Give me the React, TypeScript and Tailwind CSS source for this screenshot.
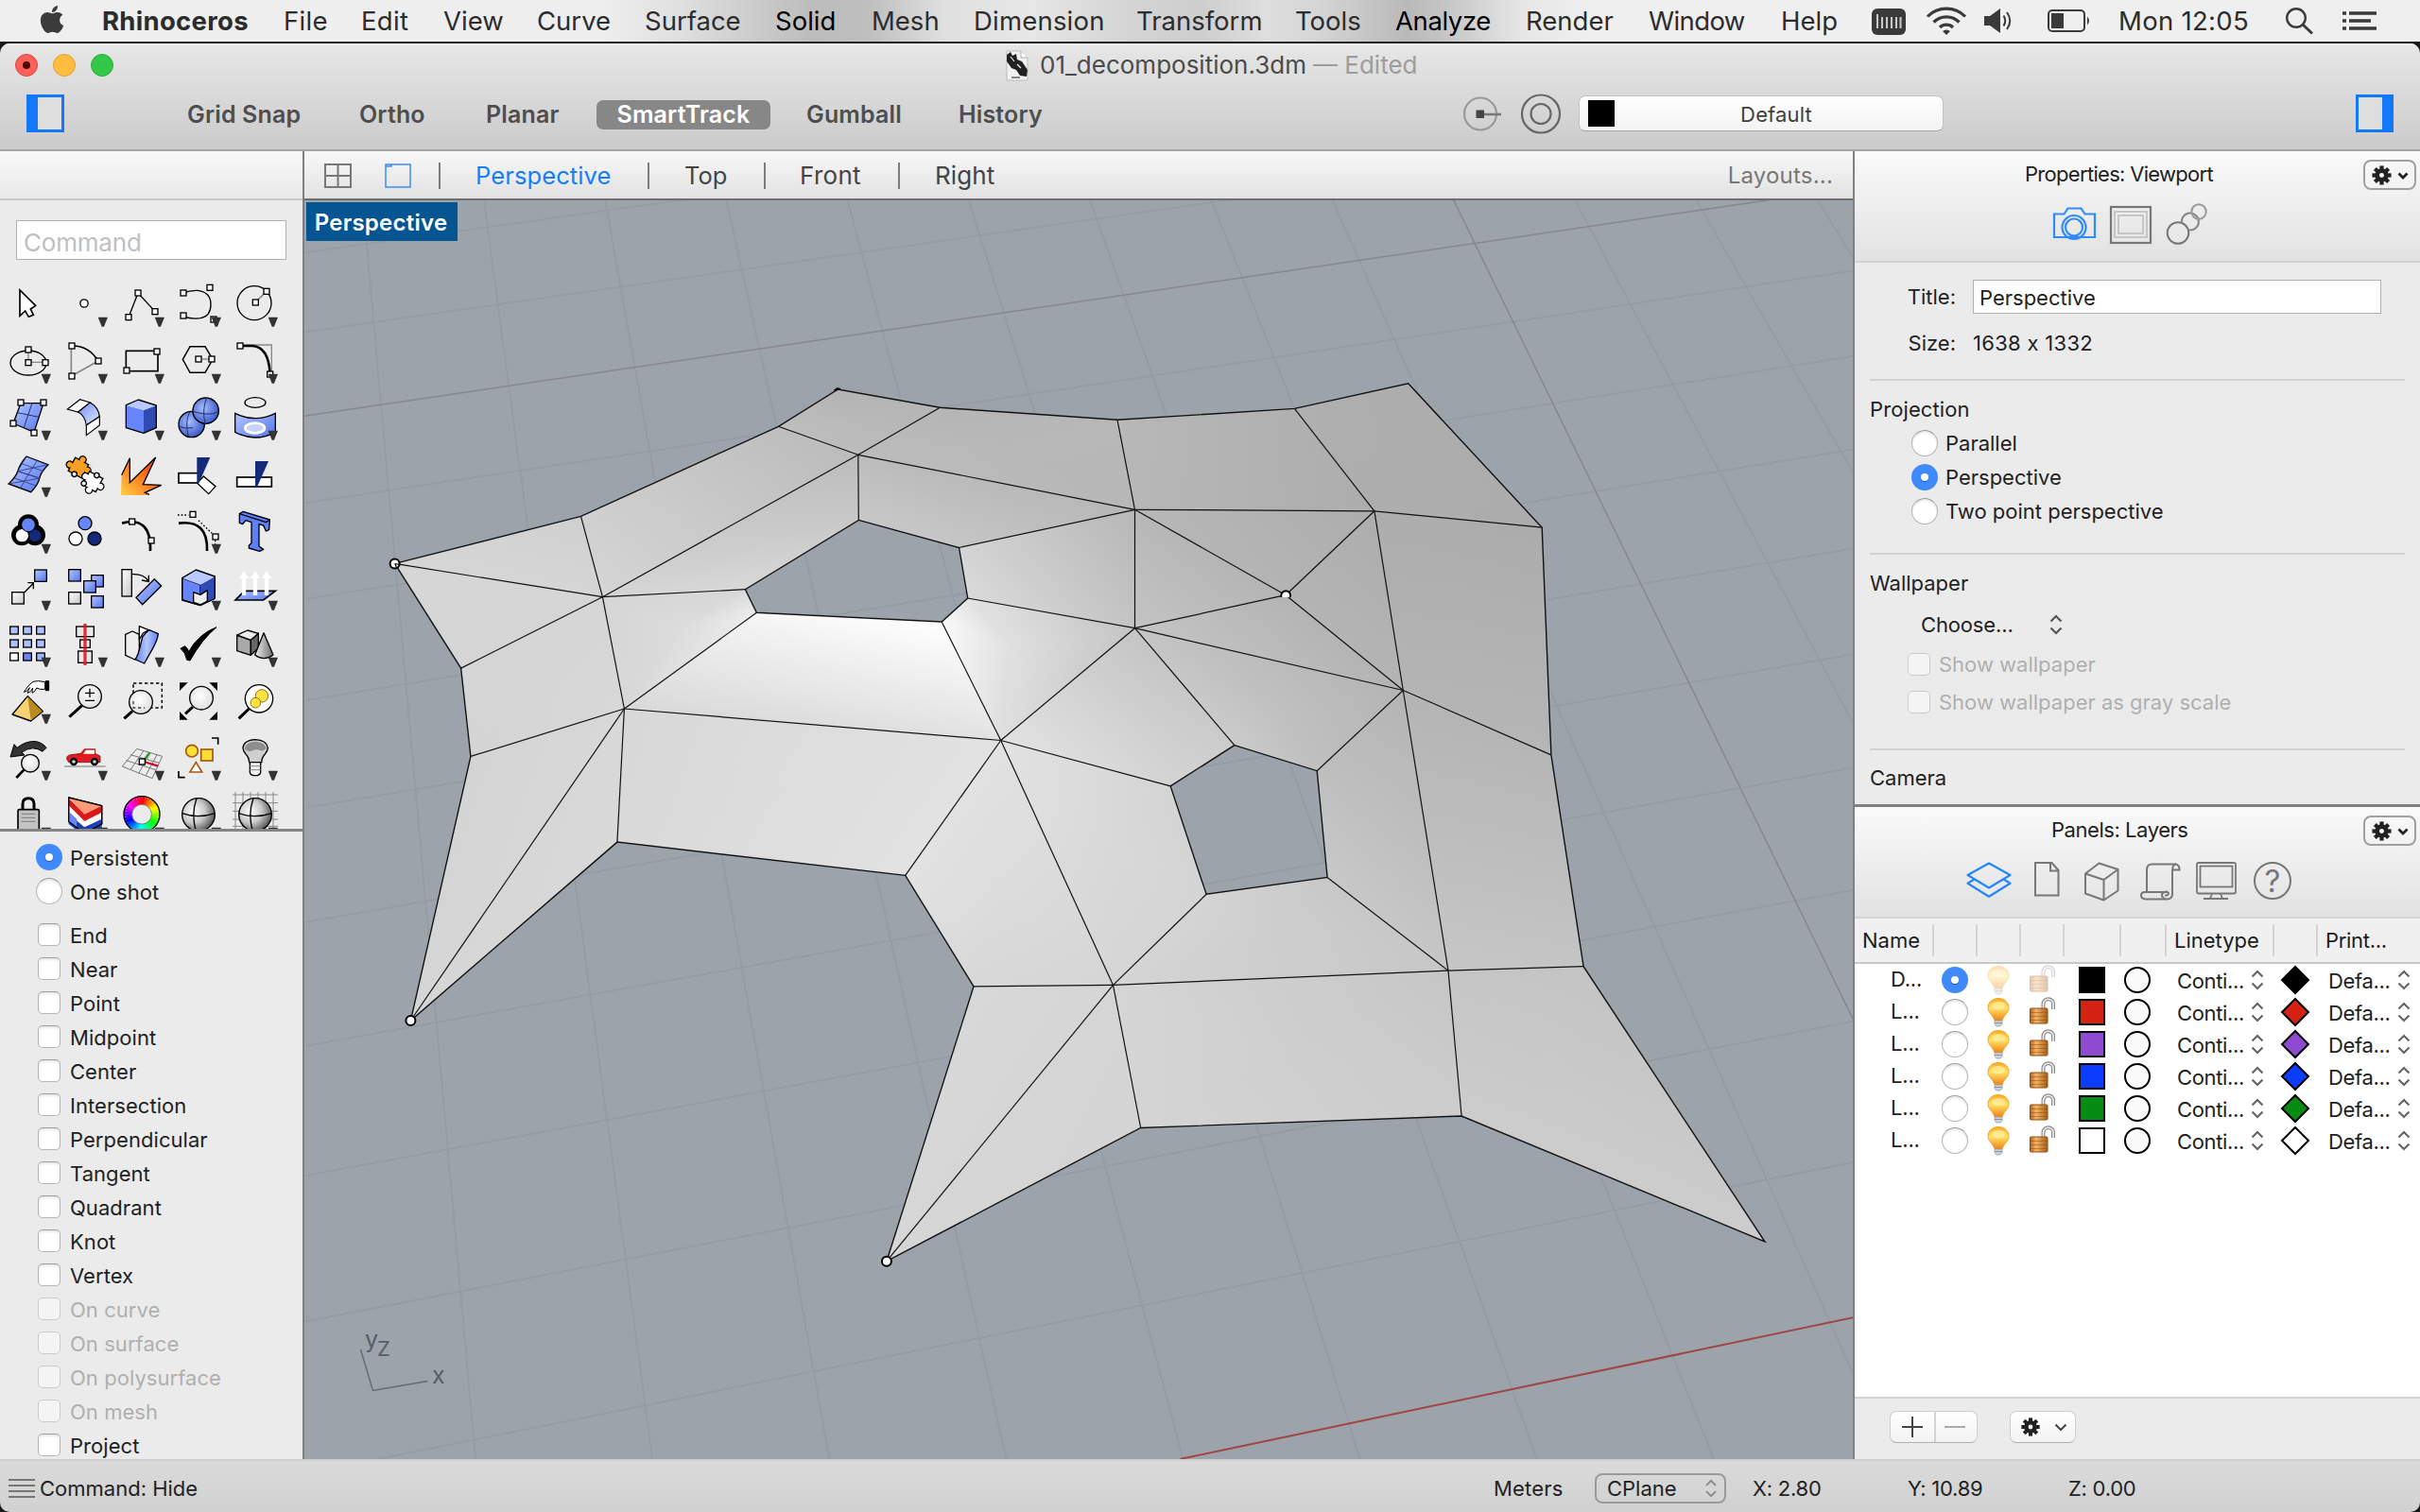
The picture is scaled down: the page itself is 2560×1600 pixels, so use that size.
import React from 'react';
import { FaApple } from 'react-icons/fa';

const FONT = "font-['Inter','Liberation_Sans',sans-serif]";

/* ------------------------------------------------------------------ */
/* Menu bar                                                            */
/* ------------------------------------------------------------------ */

const MENUS: [string, string][] = [
  ['Rhinoceros', 'w-[192px] font-bold tracking-[0.3px]'],
  ['File', 'w-[82px] tracking-[0.3px]'],
  ['Edit', 'w-[87px] tracking-[0.3px]'],
  ['View', 'w-[99px]'],
  ['Curve', 'w-[114px]'],
  ['Surface', 'w-[138px]'],
  ['Solid', 'w-[102px] text-black'],
  ['Mesh', 'w-[108px]'],
  ['Dimension', 'w-[172px] tracking-[0.2px]'],
  ['Transform', 'w-[168px]'],
  ['Tools', 'w-[106px]'],
  ['Analyze', 'w-[138px] tracking-[-0.4px] text-black'],
  ['Render', 'w-[130px]'],
  ['Window', 'w-[140px] tracking-[-0.6px]'],
  ['Help', 'w-[94px]'],
];

function MenuBar() {
  return (
    <div className="flex h-[44px] shrink-0 items-center whitespace-nowrap bg-[linear-gradient(90deg,#efefef_0px,#eeeeee_640px,#dfdfdf_720px,#bcbcbc_860px,#bfbfbf_920px,#e0e0e0_1000px,#e7e7e7_1090px,#d6d6d6_1180px,#cecece_1270px,#dedede_1340px,#d6d6d6_1390px,#b9b9b9_1490px,#c6c6c6_1530px,#e6e6e6_1610px,#efefef_1680px)] pt-[2px] text-[27.5px] text-[#2c2c2c]">
      <FaApple className="ml-[40px] mr-[38px] h-[33px] w-[30px] -translate-y-[3px] text-[#3b3b3b]" />
      {MENUS.map(([t, c]) => (
        <span key={t} className={'shrink-0 ' + c}>{t}</span>
      ))}
      <svg viewBox="1978 6 40 32" className="h-[32px] w-[40px] shrink-0">
        <rect x="1980" y="8" width="36" height="28" rx="6" fill="#3a3a3a" />
        <path d="M1986 14v15M1991 17v12M1996 17v12M2001 17v12M2006 17v12M2010.500 17v12" stroke="#c9c9c9" strokeWidth="2" />
      </svg>
      <svg viewBox="2036 4 46 34" className="ml-[18px] h-[34px] w-[46px] shrink-0 -translate-y-[1px]" fill="none" stroke="#3a3a3a" strokeWidth="3.200">
        <path d="M2039 16.500a28 28 0 0 1 40 0M2045.500 22.500a19 19 0 0 1 27 0M2052 28a10 10 0 0 1 14 0" />
        <path d="M2059 36l-4-4a6 6 0 0 1 8 0z" fill="#3a3a3a" stroke="none" />
      </svg>
      <svg viewBox="2097 6 34 32" className="ml-[15px] h-[32px] w-[34px] shrink-0 -translate-y-[1px]">
        <path d="M2099 17h6l11-8v26l-11-8h-6z" fill="#3a3a3a" />
        <path d="M2119.500 16.500q3.500 5.500 0 11M2123 13q6.500 9 0 18" fill="none" stroke="#3a3a3a" strokeWidth="2" />
      </svg>
      <svg viewBox="2164 8 48 28" className="ml-[33px] h-[28px] w-[48px] shrink-0 -translate-y-[1px]">
        <rect x="2167" y="11" width="38" height="22" rx="4" fill="none" stroke="#3a3a3a" strokeWidth="2" />
        <rect x="2170" y="14" width="13" height="16" fill="#3a3a3a" />
        <path d="M2208 17.500q4 4.500 0 9z" fill="#3a3a3a" />
      </svg>
      <span className="ml-[29px] w-[170px] shrink-0 tracking-[0.3px]">Mon 12:05</span>
      <svg viewBox="2416 6 34 32" className="ml-[5px] h-[32px] w-[34px] shrink-0 -translate-y-[1px]" fill="none" stroke="#3a3a3a">
        <circle cx="2429" cy="19" r="9.800" strokeWidth="2.400" />
        <path d="M2436 26l10 9.500" strokeWidth="3" />
      </svg>
      <svg viewBox="2476 8 40 28" className="ml-[26px] h-[28px] w-[40px] shrink-0 -translate-y-[1px]" stroke="#3a3a3a" strokeWidth="3.600">
        <path d="M2478 14h4M2485 14h29M2478 22h4M2485 22h23M2478 30h4M2485 30h29" />
      </svg>
    </div>
  );
}

/* ------------------------------------------------------------------ */
/* Title bar and tool bar                                              */
/* ------------------------------------------------------------------ */

function TitleBar() {
  return (
    <div className="flex h-[114px] shrink-0 flex-col border-b-2 border-[#a3a3a3] bg-gradient-to-b from-[#e7e7e7] to-[#cbcbcb] shadow-[inset_0_2px_0_#f4f4f4]">
      <div className="flex h-[46px] shrink-0 items-center">
        <div className="flex gap-[16px] pl-[16px]">
          <div className="flex size-[24px] items-center justify-center rounded-full border border-[#e0443e] bg-[#ff605a]">
            <div className="size-[8px] rounded-full bg-[#4c0502]" />
          </div>
          <div className="size-[24px] rounded-full border border-[#dfa035] bg-[#ffbd40]" />
          <div className="size-[24px] rounded-full border border-[#2cab3c] bg-[#34c84a]" />
        </div>
        <svg viewBox="1062 50 28 34" className="ml-[942px] h-[34px] w-[28px]">
          <path d="M1065 52h15l7 7v24h-22z" fill="#f2f2f2" stroke="#bdbdbd" />
          <path d="M1080 52v7h7" fill="#fff" stroke="#aaa" />
          <path d="M1065 56l4-3 2 4 4-2 1 6 5 2 6 9-1 7-7-1-4-6-5-2-5-7z" fill="#222" />
          <path d="M1069 58l4 5M1076 66l4 4" stroke="#eee" strokeWidth="1.200" />
          <path d="M1070 80h9" stroke="#888" strokeWidth="2" />
        </svg>
        <div className="ml-[10px] whitespace-nowrap text-[26px] leading-none text-[#4b4b4b]">
          01_decomposition.3dm<span className="ml-[7px] text-[#9c9c9c]">— Edited</span>
        </div>
      </div>
      <div className="flex h-[58px] shrink-0 items-center whitespace-nowrap text-[25px] font-semibold leading-none tracking-[0.15px] text-[#4e4e4e]">
        <div className="ml-[28px] h-[40px] w-[40px] -translate-y-[1px] border-[3px] border-l-[12px] border-[#1477f8] bg-[#dedede]" />
        <span className="ml-[130px] w-[182px]">Grid Snap</span>
        <span className="w-[134px]">Ortho</span>
        <span className="w-[117px]">Planar</span>
        <span className="flex h-[31px] w-[184px] items-center justify-center rounded-[7px] bg-[#878787] text-white">SmartTrack</span>
        <span className="ml-[38px] w-[161px]">Gumball</span>
        <span>History</span>
        <div className="ml-auto flex -translate-y-[1px] items-center pr-[28px]">
          <svg viewBox="1546 98 110 44" className="h-[44px] w-[110px]" fill="none">
            <circle cx="1566" cy="120.500" r="17" stroke="#999" strokeWidth="2.200" />
            <path d="M1566 121h22" stroke="#777" strokeWidth="2.600" />
            <rect x="1561.500" y="116.500" width="8.500" height="8.500" fill="#444" />
            <circle cx="1630" cy="120.500" r="20" stroke="#666" strokeWidth="2.200" />
            <circle cx="1630" cy="120.500" r="10.500" stroke="#666" strokeWidth="2.200" />
          </svg>
          <div className="ml-[14px] flex h-[38px] w-[386px] items-center rounded-[7px] border border-[#c2c2c2] border-b-[#a5a5a5] bg-gradient-to-b from-white to-[#f3f3f3] pl-[9px]">
            <div className="size-[28px] bg-black" />
            <span className="w-[342px] pt-[2px] text-center text-[22px] font-normal text-[#404040]">Default</span>
          </div>
          <div className="ml-[436px] h-[40px] w-[40px] border-[3px] border-r-[12px] border-[#1477f8] bg-[#dedede]" />
        </div>
      </div>
    </div>
  );
}

/* ------------------------------------------------------------------ */
/* Tool palette. Icons are drawn on a 180-unit cell.                   */
/* ------------------------------------------------------------------ */

const K = '#000';

function Sq({ x, y }: { x: number; y: number }) {
  return <rect x={x - 9} y={y - 9} width="18" height="18" fill="#fff" stroke={K} strokeWidth="4" />;
}

function Defs() {
  return (
    <svg className="absolute size-0" aria-hidden>
      <defs>
        <linearGradient id="bl" x1="0" y1="0" x2="1" y2="1"><stop offset="0" stopColor="#b4c6ff" /><stop offset="1" stopColor="#5474ee" /></linearGradient>
        <linearGradient id="bl2" x1="0" y1="0" x2="1" y2="0"><stop offset="0" stopColor="#5f7ff5" /><stop offset=".5" stopColor="#b5c8ff" /><stop offset="1" stopColor="#5f7ff5" /></linearGradient>
        <linearGradient id="bd" x1="0" y1="0" x2="1" y2="1"><stop offset="0" stopColor="#6e8cf8" /><stop offset="1" stopColor="#e6ecff" /></linearGradient>
        <radialGradient id="sph" cx=".4" cy=".4" r=".65"><stop offset="0" stopColor="#a9bdff" /><stop offset="1" stopColor="#3654c4" /></radialGradient>
        <radialGradient id="gs" cx=".35" cy=".4" r=".7"><stop offset="0" stopColor="#fff" /><stop offset=".5" stopColor="#c9c9c9" /><stop offset="1" stopColor="#4a4a4a" /></radialGradient>
        <linearGradient id="gr" x1="0" y1="0" x2="1" y2="1"><stop offset="0" stopColor="#fff" /><stop offset="1" stopColor="#c8c8c8" /></linearGradient>
        <linearGradient id="gr2" x1="0" y1="0" x2="1" y2="0"><stop offset="0" stopColor="#f0f0f0" /><stop offset="1" stopColor="#6a6a6a" /></linearGradient>
        <linearGradient id="fire" x1="1" y1="0" x2="0" y2="1"><stop offset="0" stopColor="#ee2200" /><stop offset=".5" stopColor="#ff7a20" /><stop offset="1" stopColor="#ffd044" /></linearGradient>
        <radialGradient id="lens" cx=".45" cy=".4" r=".6"><stop offset="0" stopColor="#fff" /><stop offset="1" stopColor="#dedede" /></radialGradient>
        <linearGradient id="bulb" x1="0" y1="0" x2="0" y2="1"><stop offset="0" stopColor="#ffab1e" /><stop offset=".45" stopColor="#ffe169" /><stop offset="1" stopColor="#ef8214" /></linearGradient>
        <linearGradient id="lock" x1="0" y1="0" x2="1" y2="0"><stop offset="0" stopColor="#b5651a" /><stop offset=".35" stopColor="#f3b568" /><stop offset="1" stopColor="#a95c14" /></linearGradient>
      </defs>
    </svg>
  );
}

/* A jigsaw piece: a tilted square with round knobs and notches. */
function Piece({ x, y, fill, knobs, notches }: { x: number; y: number; fill: string; knobs: [number, number][]; notches: [number, number][] }) {
  const body = (
    <>
      <rect x="-22" y="-22" width="44" height="44" />
      {knobs.map(([a, b]) => <circle key={a + ',' + b} cx={a} cy={b} r="9" />)}
    </>
  );
  return (
    <g transform={`translate(${x} ${y}) rotate(28)`}>
      <g fill={K} stroke={K} strokeWidth="8">{body}</g>
      <g fill={fill}>{body}</g>
      {notches.map(([a, b]) => <circle key={a + ',' + b} cx={a} cy={b} r="8" fill="#ebebeb" stroke={K} strokeWidth="4" />)}
    </g>
  );
}

/* Rows 0 to 3; x runs 180 per column, y starts at 240. */
const ICONS_A: React.ReactNode[][] = [
  [
    <path d="M63 291V373L80 357L91 376L106 370L97 351L113 340Z" fill="#fff" stroke={K} strokeWidth="5" />,
    <circle cx="267" cy="333" r="12.500" fill="#fff" stroke={K} strokeWidth="4" />,
    <g><path d="M408 377L438 300L492 359" fill="none" stroke={K} strokeWidth="4" /><Sq x={408} y={377} /><Sq x={438} y={300} /><Sq x={492} y={359} /></g>,
    <g><path d="M582 300q20-9 46-8q41 6 41 44t-32 44q-28 4-55-5" fill="none" stroke={K} strokeWidth="4" /><Sq x={582} y={300} /><Sq x={666} y={283} /><Sq x={582} y={372} /><Sq x={678} y={384} /></g>,
    <g><circle cx="807" cy="332" r="54" fill="none" stroke={K} strokeWidth="4" /><path d="M811 329L846 295" stroke="#777" strokeWidth="4" /><Sq x={811} y={330} /><Sq x={846} y={295} /></g>,
  ],
  [
    <g><ellipse cx="90" cy="522" rx="57" ry="39" fill="none" stroke={K} strokeWidth="4" /><path d="M90 480v40h54" fill="none" stroke="#888" strokeWidth="4" /><Sq x={90} y={480} /><Sq x={90} y={521} /><Sq x={144} y={521} /></g>,
    <g><path d="M226 468V564L312 516" fill="none" stroke="#888" strokeWidth="5" /><path d="M228 468q52-2 84 48" fill="none" stroke={K} strokeWidth="5" /><Sq x={228} y={468} /><Sq x={312} y={516} /><Sq x={228} y={564} /></g>,
    <g><rect x="400" y="484" width="101" height="64" fill="none" stroke={K} strokeWidth="5" /><Sq x={498} y={486} /><Sq x={402} y={546} /></g>,
    <g><path d="M580 511l23-41h48l24 41l-24 42h-48z" fill="none" stroke={K} strokeWidth="4.500" /><path d="M630 510h42" stroke="#888" strokeWidth="4" /><Sq x={630} y={510} /><Sq x={672} y={510} /></g>,
    <g><path d="M768 465h94v90" fill="none" stroke="#888" strokeWidth="4" /><path d="M762 468h38q52 2 57 88" fill="none" stroke={K} strokeWidth="8" /><Sq x={762} y={468} /><Sq x={857} y={558} /></g>,
  ],
  [
    <g><path d="M66 650H138L108 742L42 714Z" fill="url(#bl)" stroke={K} strokeWidth="4" /><path d="M102 650q-14 40-26 78M55 680l68 14" stroke="#1f2f70" strokeWidth="3" fill="none" /><Sq x={66} y={648} /><Sq x={138} y={648} /><Sq x={42} y={714} /><Sq x={108} y={744} /></g>,
    <g stroke={K} strokeWidth="3.500"><path d="M214 669l40-31l32 10l-38 30z" fill="#fff" /><path d="M286 648q26 14 30 44l-42 28q-4-30-26-42z" fill="url(#bd)" /><path d="M316 692v28l-42 32v-32z" fill="#fff" /></g>,
    <g stroke={K} strokeWidth="4" strokeLinejoin="round"><path d="M400 657v71l56 17v-73z" fill="#6685fa" stroke="none" /><path d="M496 657v71l-40 17v-73z" fill="#2f4bb2" stroke="none" /><path d="M400 656l39-17l57 18l-40 15z" fill="#b9c9ff" stroke="none" /><path d="M400 656l39-17l57 18v71l-40 17l-56-17z" fill="none" /></g>,
    <g stroke={K} strokeWidth="4" fill="url(#sph)"><circle cx="608" cy="717" r="41" /><circle cx="653" cy="674" r="41" /><path d="M612 676q10 4 38 8 28 2 43-8M655 634q-14 38-4 80M568 724q20 8 44 4M602 678q-16 30-4 78" fill="none" stroke="#1f2f70" strokeWidth="3" /></g>,
    <g><ellipse cx="810" cy="648" rx="33" ry="16" fill="none" stroke={K} strokeWidth="4" /><path d="M746 682q64 32 128 0v60q-64 34-128 0z" fill="url(#bl)" stroke={K} strokeWidth="4" /><ellipse cx="809" cy="729" rx="31" ry="16" fill="#c6d3ff" stroke="#fff" strokeWidth="8" /></g>,
  ],
  [
    <g><path d="M84 819l69 26q-24 24-28 44t-27 43l-71-26q24-22 30-42t27-45z" fill="url(#bl)" stroke={K} strokeWidth="4" /><path d="M66 841l72 25M56 866l70 22M46 888l68 24M118 832q-14 22-28 44t-26 46M84 819l-28 47 70 22M153 845l-97 21M126 888l-99 18" stroke="#2a3a80" strokeWidth="2.500" fill="none" /></g>,
    <g>
      <Piece x={249} y={855} fill="#f9a024" knobs={[[0, -29], [-29, 4], [29, -6]]} notches={[[-2, 24]]} />
      <Piece x={294} y={899} fill="#ffffff" knobs={[[29, 2], [2, 29], [-28, -4]]} notches={[[2, -24], [-22, 18]]} />
    </g>,
    <g><path d="M386 880l26-52l2 72l80-78l-38 84l56 4l-50 24l10 8h-88z" fill="url(#fire)" /><path d="M386 878l26-54v78l82-80l-40 86l58 2l-52 24l14 6" fill="none" stroke={K} strokeWidth="4" /></g>,
    <g><rect x="567" y="872" width="64" height="31" fill="#fff" stroke={K} strokeWidth="5" /><path d="M646 882l38 32l-22 24l-36-34z" fill="#fff" stroke={K} strokeWidth="4" /><path d="M625 822h42l-36 82h-6z" fill="#152a78" /></g>,
    <g><rect x="752" y="885" width="110" height="30" fill="#fff" stroke={K} strokeWidth="5" /><path d="M810 834h42l-36 82h-6z" fill="#152a78" /></g>,
  ],
];

/* Rows 4 to 9; y starts at -30. */
const ICONS_B: React.ReactNode[][] = [
  [
    <g><g fill={K}><circle cx="90" cy="46" r="33" /><circle cx="69" cy="79" r="33" /><circle cx="111" cy="79" r="33" /></g><circle cx="70" cy="80" r="20" fill="#fff" /><circle cx="111" cy="80" r="19" fill="#15297a" /><circle cx="90" cy="46" r="22" fill="#6685fa" stroke={K} strokeWidth="3" /></g>,
    <g stroke={K} strokeWidth="4"><circle cx="270" cy="41" r="21" fill="#6685fa" /><circle cx="240" cy="90" r="21" fill="#fff" /><circle cx="300" cy="90" r="21" fill="#15297a" /></g>,
    <g><path d="M387 41q94-24 90 88" fill="none" stroke={K} strokeWidth="8" /><Sq x={419} y={36} /><Sq x={480} y={96} /></g>,
    <g><path d="M567 41q94-12 90 88" fill="none" stroke={K} strokeWidth="8" /><path d="M564 15h34M630 32l52 50M683 95v34" stroke={K} strokeWidth="4" strokeDasharray="5 6" /><Sq x={612} y={13} /><Sq x={684} y={84} /></g>,
    <g stroke={K} strokeWidth="4" strokeLinejoin="round"><path d="M760 11l12-7l84 26l-2 32l-10 4l-8-18l-14-4v70l14 10l-12 6l-34-10v-8l8-8v-66l-18-6l-10 12l-10-4z" fill="#5f7ff5" /><path d="M760 11l84 27l12-8" fill="none" /></g>,
  ],
  [
    <g><rect x="38" y="260" width="38" height="37" fill="url(#gr)" stroke={K} strokeWidth="4" /><rect x="110" y="189" width="38" height="37" fill="url(#bl)" stroke={K} strokeWidth="4" /><path d="M78 260l28-28M88 230h18v20" fill="none" stroke={K} strokeWidth="4" /></g>,
    <g stroke={K} strokeWidth="4" fill="url(#bl)"><rect x="218" y="188" width="38" height="37" /><rect x="218" y="260" width="38" height="37" fill="url(#gr)" /><rect x="290" y="206" width="38" height="37" /><rect x="266" y="224" width="38" height="37" /><rect x="290" y="272" width="38" height="37" /></g>,
    <g stroke={K} strokeWidth="4"><rect x="387" y="188" width="31" height="85" fill="url(#gr)" /><path d="M490 218l22 22l-60 59l-20-22z" fill="url(#bl)" /><path d="M420 203q34-2 50 20M450 222l22 4v-20" fill="none" /></g>,
    <g stroke={K} strokeWidth="4" strokeLinejoin="round"><path d="M578 215v70l58 17v-66z" fill="#6685fa" /><path d="M682 210v68l-46 24v-66z" fill="#2f4bb2" stroke="none" /><path d="M578 215l44-26l60 21l-46 26z" fill="#b9c9ff" stroke="none" /><path d="M614 260l22 8 22-14v34l-22 12-22-8z" fill="#eee" /><path d="M578 215l44-26l60 21v70l-46 22l-58-18z" fill="none" /></g>,
    <g><path d="M776 256h98l-38 29h-89z" fill="url(#bl)" stroke={K} strokeWidth="5" /><path d="M774 270v-60M810 270v-60M846 270v-60" stroke="#fff" strokeWidth="13" /><path d="M759 216l15-24l15 24zM795 216l15-24l15 24zM831 216l15-24l15 24z" fill="#fff" /></g>,
  ],
  [
    <g stroke={K} strokeWidth="4">{[32, 74, 116].map((x) => [369, 411, 453].map((y) => <rect key={x + '-' + y} x={x} y={y} width="26" height="24" fill={y === 453 ? (x === 32 ? '#fff' : x === 74 ? '#6685fa' : '#9db4ff') : '#adc0ff'} />))}</g>,
    <g><g stroke={K} strokeWidth="4" fill="#e8e8e8"><rect x="242" y="369" width="56" height="32" /><rect x="254" y="411" width="32" height="25" /><rect x="248" y="447" width="44" height="37" /></g><path d="M270 360v132" stroke="#dc1220" strokeOpacity=".85" strokeWidth="10" /></g>,
    <g stroke={K} strokeWidth="4" strokeLinejoin="round"><path d="M398 394l22-10l22 10v66l-14 14l-30-14z" fill="#ededed" /><path d="M442 368l30 12l-18 10l-12 20z" fill="#fff" /><path d="M452 402q14-18 22-22l28 12q-2 20-18 48t-26 46l-28-12q10-20 14-38t8-34z" fill="url(#bl2)" /></g>,
    <path d="M573 439l14-8q10 8 12 18q30-56 88-78q-46 38-84 106l-10-2q-4-24-20-36z" fill={K} stroke={K} strokeWidth="3" />,
    <g stroke={K} strokeWidth="4" strokeLinejoin="round"><path d="M752 396v50l44 14v-48z" fill="#a9a9a9" /><path d="M796 412v48l24-22v-48z" fill="#666" /><path d="M752 396l34-15l34 10l-24 21z" fill="#ececec" /><path d="M837 389l30 70q-30 22-58 0z" fill="url(#gr2)" /></g>,
  ],
  [
    <g><path d="M88 590l48 48l-38 31l-59-21z" fill="#f7d272" stroke={K} strokeWidth="4" strokeLinejoin="round" /><path d="M88 592l46 46l-36 29z" fill="#b78b1e" /><path d="M145 542h10v30h-10z" fill={K} stroke={K} strokeWidth="3" /><path d="M143 545q-24-6-38-1q-16 10-29 33q10 0 18-14q-4 8-6 17q10-2 16-16q-2 8-2 16q10-4 14-16q10 6 27 4z" fill="#fff" stroke={K} strokeWidth="3" /></g>,
    <g><circle cx="285" cy="591" r="37" fill="url(#lens)" stroke={K} strokeWidth="4" /><path d="M260 620l-40 36" stroke={K} strokeWidth="9" /><path d="M285 566v28M270 580h30M270 604h30" stroke={K} strokeWidth="4" /></g>,
    <g><rect x="423" y="549" width="91" height="78" fill="none" stroke={K} strokeWidth="4.500" strokeDasharray="10 8" /><circle cx="447" cy="609" r="37" fill="url(#lens)" stroke={K} strokeWidth="4" /><path d="M423 606v21h36" fill="none" stroke="#444" strokeWidth="4" strokeDasharray="10 8" /><path d="M420 638l-26 23" stroke={K} strokeWidth="9" /></g>,
    <g><path d="M570 547h26l-26 26zM690 547h-26l26 26zM570 665h26l-26-26zM690 665h-26l26-26z" fill={K} /><circle cx="639" cy="596" r="37" fill="url(#lens)" stroke={K} strokeWidth="4" /><path d="M612 624l-24 22" stroke={K} strokeWidth="9" /></g>,
    <g><circle cx="822" cy="598" r="44" fill="#fff" stroke={K} strokeWidth="4" /><path d="M790 630l-32 31" stroke={K} strokeWidth="9" /><circle cx="831" cy="589" r="20" fill="#ffe23e" stroke="#8d6d12" strokeWidth="3" /><circle cx="811" cy="611" r="16" fill="#ffe23e" stroke="#8d6d12" strokeWidth="3" /></g>,
  ],
  [
    <g><circle cx="96" cy="803" r="28" fill="url(#lens)" stroke={K} strokeWidth="4" /><path d="M76 824l-24 25" stroke={K} strokeWidth="8" /><path d="M33 783l12-40l9 11q30-24 62-20q22 6 31 20l-12 12q-30-22-66 2l9 9z" fill="#333" stroke={K} strokeWidth="3" /></g>,
    <g><path d="M204 813h131" stroke="#9d9d9d" strokeWidth="5" /><path d="M212 790q-2-12 12-14l32-4l12-14h34v14l16 8v20h-100z" fill="#e21b22" stroke="#5c0a0c" strokeWidth="2" /><path d="M264 773l9-12h27v12z" fill="#fff" /><g fill="#d9d9d9" stroke={K} strokeWidth="7"><circle cx="234" cy="798" r="9" /><circle cx="300" cy="798" r="9" /></g></g>,
    <g><path d="M434 757l81 24l-32 70l-95-38zM414 776l91 26M400 794l94 30M456 763l-42 61M478 769l-38 66M498 776l-36 67" fill="none" stroke="#777" strokeWidth="3" /><path d="M456 795l18-26" stroke="#2aa22a" strokeWidth="7" /><path d="M456 798l46 14" stroke="#d01020" strokeWidth="7" /><Sq x={451} y={798} /></g>,
    <g fill="none" stroke="#a25a14" strokeWidth="5"><circle cx="609" cy="764" r="19" fill="#ffdf33" /><rect x="638" y="759" width="37" height="36" fill="#ffdf33" /><path d="M622 800l19 31h-38z" fill="#fff" /><path d="M672 723h20v20M567 828v20h20" stroke={K} /></g>,
    <g stroke={K} strokeWidth="4"><path d="M793 796h34v36q-2 10-17 10t-17-10z" fill="#f0f0f0" /><path d="M793 812h34M793 824h34" stroke="#888" strokeWidth="3" /><path d="M791 800q-1-16-11-26q-9-10-9-20q2-24 39-26q37 2 40 26q0 10-9 20q-10 10-11 26z" fill="#cfcfcf" /><path d="M776 756q4-20 34-22 31 2 35 22-8 10-20 6-14-6-28 2-14 4-21-8z" fill="#8e8e8e" stroke="none" /></g>,
  ],
  [
    <g><path d="M72 950v-18q0-18 18-18t18 18v18" fill="none" stroke={K} strokeWidth="9" /><rect x="57" y="950" width="67" height="66" rx="4" fill="#c4c4c4" stroke={K} strokeWidth="5" /><path d="M68 964h44M68 976h44M68 988h44" stroke="#888" strokeWidth="4" /></g>,
    <g stroke={K} strokeWidth="4" strokeLinejoin="round"><path d="M218 912v76l50 38l55-30v-58z" fill="#fff" /><path d="M218 964l50 42l55-26v30l-55 24l-50-38z" fill="#1f3fae" stroke="none" /><path d="M218 956l26 24v26l-26-16z" fill="#6685fa" stroke="none" /><path d="M218 914l50 50l55-27v22l-55 28l-50-50z" fill="#d91a1a" stroke="none" /><path d="M218 912l105 26l-55 27z" fill="#ff9a76" stroke="none" /><path d="M323 938v58l-55 30l-50-38v-76z" fill="none" /></g>,
    <g fill="none">
      {Array.from({ length: 36 }, (_, i) => {
        const a = (i * Math.PI) / 18;
        const b = ((i + 1.15) * Math.PI) / 18;
        return <path key={i} d={`M${450 + 44 * Math.sin(a)} ${965 - 44 * Math.cos(a)}L${450 + 44 * Math.sin(b)} ${965 - 44 * Math.cos(b)}`} stroke={`hsl(${i * 10} 100% 50%)`} strokeWidth="26" />;
      })}
      <circle cx="450" cy="965" r="57" stroke={K} strokeWidth="4" />
      <circle cx="450" cy="965" r="31" fill="#ebebeb" stroke="#555" strokeWidth="2" />
    </g>,
    <g stroke={K} strokeWidth="4" fill="none"><circle cx="630" cy="966" r="52" fill="url(#gs)" /><path d="M578 962q50 18 104 0M624 914q-18 50-2 104" /></g>,
    <g stroke={K} strokeWidth="4" fill="none"><path d="M747 894v126M771 894v126M795 894v126M819 894v126M843 894v126M867 894v126M738 903h144M738 929h144M738 955h144M738 981h144M738 1003h144" stroke="#888" strokeWidth="3" /><circle cx="810" cy="966" r="52" fill="url(#gs)" /><path d="M758 962q50 18 104 0M804 914q-18 50-2 104" /></g>,
  ],
];

const FLY = ['01111', '11111', '11111', '10000', '10010', '10011', '11111', '10000', '11111', '11111'];

function Palette() {
  return (
    <div className="grid h-[587px] shrink-0 grid-cols-[repeat(5,60px)] content-start overflow-hidden">
      {FLY.map((flags, r) =>
        flags.split('').map((f, c) => {
          const top = r < 4 ? 240 + 180 * r : -30 + 180 * (r - 4);
          const icon = r < 4 ? ICONS_A[r][c] : ICONS_B[r - 4][c];
          return (
            <svg key={r + '-' + c} viewBox={`${180 * c} ${top} 180 180`} className="size-[60px] overflow-visible">
              {icon}
              {f === '1' && <path transform={`translate(${180 * c} ${top})`} d="M131 137h31l-8 20-4 10h-7l-4-10z" fill="#333" />}
            </svg>
          );
        }),
      )}
    </div>
  );
}

const SNAPS = ['End', 'Near', 'Point', 'Midpoint', 'Center', 'Intersection', 'Perpendicular', 'Tangent', 'Quadrant', 'Knot', 'Vertex', 'On curve', 'On surface', 'On polysurface', 'On mesh', 'Project'];

function Radio({ on }: { on?: boolean }) {
  return on ? (
    <div className="flex size-[28px] shrink-0 items-center justify-center rounded-full bg-[#3f8afd]">
      <div className="size-[8px] rounded-full bg-white shadow-[0_1px_1px_#1d5bc0]" />
    </div>
  ) : (
    <div className="size-[28px] shrink-0 rounded-full border-[1.5px] border-[#b5b5b5] border-t-[#9c9c9c] bg-white shadow-[inset_0_2px_2px_#e6e6e6]" />
  );
}

function Check({ off }: { off?: boolean }) {
  return (
    <div className={'size-[24px] shrink-0 rounded-[5px] border-[1.5px] ' + (off ? 'border-[#cbcbcb] bg-[#f4f4f4]' : 'border-[#b5b5b5] border-t-[#9f9f9f] bg-white shadow-[inset_0_2px_2px_#e8e8e8]')} />
  );
}

function LeftPanel() {
  return (
    <div className="flex w-[322px] shrink-0 flex-col border-r-2 border-[#808080] bg-[#ebebeb] text-[22px] leading-none">
      <div className="h-[52px] shrink-0 border-b-2 border-[#cacaca] bg-gradient-to-b from-[#f8f8f8] to-[#e9e9e9]" />
      <div className="mx-[17px] mt-[21px] flex h-[42px] shrink-0 items-center border border-[#b1b1b1] bg-white pl-[7px] pt-[6px] text-[26px] tracking-[-0.2px] text-[#bfbfbf]">Command</div>
      <div className="h-[15px] shrink-0" />
      <Palette />
      <div className="h-[3px] shrink-0 bg-[#858585]" />
      <div className="flex h-[664px] shrink-0 flex-col overflow-hidden pt-[9px]">
        {['Persistent', 'One shot'].map((t, i) => (
          <div key={t} className="flex h-[36px] shrink-0 items-center gap-[8px] pl-[38px] text-[#222]">
            <Radio on={i === 0} />
            <span className="translate-y-[1px] tracking-[0.06px]">{t}</span>
          </div>
        ))}
        <div className="h-[10px] shrink-0" />
        {SNAPS.map((t) => (
          <div key={t} className={'flex h-[36px] shrink-0 items-center gap-[10px] pl-[40px] ' + (t.startsWith('On ') ? 'text-[#b0b0b0]' : 'text-[#222]')}>
            <Check off={t.startsWith('On ')} />
            <span className="translate-y-[1px] tracking-[0.05px]">{t}</span>
          </div>
        ))}
      </div>
    </div>
  );
}

/* ------------------------------------------------------------------ */
/* Viewport                                                            */
/* ------------------------------------------------------------------ */

const V: Record<string, [number, number, number]> = {
  P1: [417.6, 596.4, 214], P2: [614.5, 546.4, 208], P3: [823.4, 451.3, 190], P4: [886.5, 412, 179], P5: [994.4, 431.3, 181],
  P6: [1182, 444.3, 184], P7: [1369.4, 432.4, 176], P8: [1489.7, 405.8, 173], P9: [1631.2, 558.2, 172], P10: [1640.9, 798.9, 182],
  P11: [1675.1, 1022.7, 196], TR: [1867, 1314, 204], M: [1546.1, 1181, 204], N: [1206.7, 1193.5, 212], TB: [937.9, 1334.7, 214],
  L6: [1030, 1043.8, 216], L5: [957.7, 926.3, 226], L4: [652.9, 891.1, 217], TL: [434.4, 1080, 213], L2: [497.9, 800.4, 212], L1: [487.6, 707.1, 213],
  A: [907.8, 481.3, 188], B: [637.4, 631.7, 213], C: [660.4, 750, 216], D: [1058.7, 783.5, 226], E: [1200.5, 539.3, 183], F: [1200.5, 664.7, 196],
  G: [1177.5, 1042.4, 213], H: [1453.9, 540.8, 173], I: [1360.1, 629.7, 180], J: [1484.3, 730.5, 180], K: [1532, 1027.1, 198],
  h1: [908.3, 550.4, 200], h2: [1014.5, 579.5, 206], h3: [1023.7, 633, 226], h4: [996.2, 658, 255], h5: [800.4, 648.2, 246], h6: [788.4, 623.7, 216],
  g1: [1305.9, 788.6, 203], g2: [1393.2, 815.7, 191], g3: [1404.1, 928.4, 200], g4: [1276.1, 946.3, 212], g5: [1238.2, 831.9, 212],
};

/* Faces, with a per-face brightness where the surface is creased ("h4:255"). */
const FACES = [
  'P1 P2 B', 'P2 P3 A B', 'P3 P4 P5 A', 'A P5 P6 E', 'P6 P7 H E', 'P7 P8 P9 H', 'P1 B L1', 'L1 B C L2', 'L2 C TL', 'C L4 TL', 'C D L5 L4',
  'B h6 h5:236 C', 'B A h1 h6', 'A E h2:198 h1', 'E F h3:218 h2:212', 'F D:222 h4:250 h3', 'C h5 h4 D', 'E H I', 'E I F', 'H J I', 'I J F',
  'H P9 P10 J', 'J P10 P11 K', 'F J g2 g1', 'F g1 g5 D', 'J K g3 g2', 'D g5 g4 G', 'g4 g3 K G', 'D G L6 L5', 'G L6 TB', 'G TB N', 'G K M N', 'K P11 TR M',
];

const EDGES =
  'P1-B P2-B B-L1 B-A B-h6 B-C P3-A A-P5 A-h1 A-E h2-E P6-E E-F E-H E-I P7-H H-P9 H-I H-J I-F I-J F-h3 F-D F-g1 F-J J-P10 J-g2 J-K K-P11 K-g3 K-G K-M G-L6 G-g4 G-D G-N G-TB D-g5 D-L5 D-h4 D-C C-h5 C-L2 C-TL C-L4';

const OUTLINE = 'P1 P2 P3 P4 P5 P6 P7 P8 P9 P10 P11 TR M N TB L6 L5 L4 TL L2 L1';
const HOLES = ['h1 h2 h3 h4 h5 h6', 'g1 g2 g3 g4 g5'];

type P3 = [number, number, number];

function triangles(): P3[][] {
  const out: P3[][] = [];
  for (const face of FACES) {
    const pts = face.split(' ').map((n): P3 => {
      const [k, g] = n.split(':');
      const v = V[k];
      return [v[0], v[1], g ? Number(g) : v[2]];
    });
    if (pts.length === 3) out.push(pts);
    else {
      const c = [0, 1, 2].map((j) => pts.reduce((s, p) => s + p[j], 0) / pts.length) as P3;
      pts.forEach((p, i) => out.push([p, pts[(i + 1) % pts.length], c]));
    }
  }
  return out;
}

function Shade({ tri, id }: { tri: P3[]; id: string }) {
  const [p, q, r] = [...tri].sort((a, b) => a[2] - b[2]);
  const ux = q[0] - p[0], uy = q[1] - p[1], ug = q[2] - p[2];
  const vx = r[0] - p[0], vy = r[1] - p[1], vg = r[2] - p[2];
  const det = ux * vy - uy * vx;
  const a = (ug * vy - vg * uy) / det;
  const b = (ux * vg - vx * ug) / det;
  const m = a * a + b * b;
  const points = tri.map((t) => t[0] + ',' + t[1]).join(' ');
  const lo = `rgb(${p[2]} ${p[2]} ${p[2]})`;
  const hi = `rgb(${r[2]} ${r[2]} ${r[2]})`;
  if (m < 1e-9 || vg < 0.01) return <polygon points={points} fill={lo} stroke={lo} />;
  return (
    <g>
      <linearGradient id={id} gradientUnits="userSpaceOnUse" x1={p[0]} y1={p[1]} x2={p[0] + (a * vg) / m} y2={p[1] + (b * vg) / m}>
        <stop offset="0" stopColor={lo} />
        <stop offset="1" stopColor={hi} />
      </linearGradient>
      <polygon points={points} fill={`url(#${id})`} stroke={`url(#${id})`} />
    </g>
  );
}

const ROWS: [number, number][] = [[267.6, 39], [351.7, 117], [532.5, 286.5], [634.4, 377.1], [741.5, 475.8], [855.4, 580.4], [976.3, 692.6], [1107.4, 812.4], [1244.6, 942], [1399, 1080.7], [1560, 1230]];
const COLS = [-3, -2, -1, 1, 2, 3, 4, 5, 6, 7, 8, 9];
const colX = (k: number, y: number) => 1605.2 - 134.35 * k + (y - 350) * (0.4874 - 0.0442 * k);

function Viewport() {
  const poly = (s: string) => s.split(' ').map((n) => V[n][0] + ',' + V[n][1]).join(' ');
  return (
    <div className="relative flex-1 overflow-hidden bg-[#9ca3ab]">
      <svg viewBox="322 212 1638 1332" className="block h-[1332px] w-[1638px]">
        <g stroke="#939ba3" strokeWidth="1.500">
          {ROWS.map(([a, b]) => <line key={a} x1="320" y1={a} x2="1960" y2={b} />)}
          {COLS.map((k) => <line key={k} x1={colX(k, 200)} y1="200" x2={colX(k, 1550)} y2="1550" />)}
        </g>
        <g stroke="#89868f" strokeWidth="1.500">
          <line x1="320" y1="440.600" x2="1960" y2="198.500" />
          <line x1={colX(0, 200)} y1="200" x2={colX(0, 1100)} y2="1100" />
        </g>
        <line x1="1248.500" y1="1544" x2="1961" y2="1394" stroke="#9f4546" strokeWidth="2" />
        {triangles().map((t, i) => <Shade key={i} tri={t} id={'f' + i} />)}
        <g fill="none" stroke="#111" strokeWidth="1.200">
          <polygon points={poly(OUTLINE)} strokeWidth="1.400" />
          {HOLES.map((h) => <polygon key={h} points={poly(h)} strokeWidth="1.400" />)}
          {EDGES.split(' ').map((e) => {
            const [p, q] = e.split('-').map((n) => V[n]);
            return <line key={e} x1={p[0]} y1={p[1]} x2={q[0]} y2={q[1]} />;
          })}
        </g>
        <g fill="#fff" stroke="#000" strokeWidth="2">
          <circle cx="417.600" cy="596.500" r="5" />
          <circle cx="434.400" cy="1080" r="5" />
          <circle cx="937.900" cy="1334.700" r="5" />
          <path d="M1355.500 632a5 5 0 1 1 9.400 0" />
        </g>
        <path d="M417.600 596.500l6 1.200M417.600 596.500l2.500 5" stroke="#111" strokeWidth="1.200" />
        <path d="M882.500 413.500l3.500-2.500l3 1" fill="none" stroke="#000" strokeWidth="2" />
        <g stroke="#666b71" strokeWidth="1.500" fill="none">
          <path d="M381.500 1428L394.500 1471.500L452.500 1461.500" />
        </g>
        <g fill="#595e65" className={FONT} fontSize="25">
          <text x="386" y="1426">y</text>
          <text x="399" y="1434.500" fontSize="22">Z</text>
          <text x="457" y="1463.500">x</text>
        </g>
      </svg>
      <div className="absolute left-[2px] top-[2px] flex h-[41px] w-[160px] items-center justify-center bg-[#045591] pr-[2px] pt-[2px] text-[24px] font-semibold tracking-[0.25px] text-white">Perspective</div>
    </div>
  );
}

function Sep({ className }: { className: string }) {
  return <div className={'h-[28px] w-[2px] bg-[#7c7c7c] ' + className} />;
}

function Center() {
  return (
    <div className="flex w-[1638px] shrink-0 flex-col">
      <div className="flex h-[52px] shrink-0 items-center border-b-2 border-[#6f6f6f] bg-gradient-to-b from-[#f8f8f8] to-[#e2e2e2] pt-[2px] text-[26px] leading-none text-[#444]">
        <svg viewBox="342 171 32 28" className="ml-[20px] h-[28px] w-[32px]" fill="none" stroke="#777" strokeWidth="2">
          <path d="M344 173h27v24h-27zM357.500 173v24M344 185h27" />
        </svg>
        <svg viewBox="405 171 32 28" className="ml-[31px] h-[28px] w-[32px]" fill="none" stroke="#3b8cf5" strokeWidth="1.500">
          <path d="M408 173h26v24h-26zM408 173h6v2h-6z" />
        </svg>
        <Sep className="ml-[27px]" />
        <span className="ml-[37px] w-[182px] text-[25.500px] tracking-[0.1px] text-[#147efb]">Perspective</span>
        <Sep className="" />
        <span className="ml-[37px] w-[85px] text-[25.500px]">Top</span>
        <Sep className="-ml-[1px]" />
        <span className="ml-[36px] w-[104px] tracking-[0.3px]">Front</span>
        <Sep className="" />
        <span className="ml-[37px] tracking-[0.1px]">Right</span>
        <span className="ml-auto mr-[21px] text-[24px] tracking-[0.2px] text-[#777]">Layouts...</span>
      </div>
      <Viewport />
    </div>
  );
}

/* ------------------------------------------------------------------ */
/* Right panels                                                        */
/* ------------------------------------------------------------------ */

function Gear({ className }: { className: string }) {
  return (
    <svg viewBox="-12 -12 24 24" className={className}>
      {[0, 45, 90, 135].map((a) => <rect key={a} x="-2.200" y="-10.500" width="4.400" height="21" fill="#222" transform={`rotate(${a})`} />)}
      <circle r="5.300" fill="none" stroke="#222" strokeWidth="4.400" />
      <circle r="2.600" fill="#f6f6f6" />
    </svg>
  );
}

function GearButton() {
  return (
    <div className="ml-auto mr-[4px] flex h-[32px] w-[56px] items-center rounded-[8px] border-2 border-[#a0a0a0] pl-[6px]">
      <Gear className="size-[23px]" />
      <svg viewBox="0 0 12 8" className="ml-[5px] mt-[2px] h-[8px] w-[12px]" fill="none" stroke="#222" strokeWidth="2.800"><path d="M1.500 1.500L6 6L10.500 1.500" /></svg>
    </div>
  );
}

function Chevrons({ className }: { className: string }) {
  return (
    <svg viewBox="0 0 14 22" className={'h-[22px] w-[14px] shrink-0 ' + className} fill="none" stroke="currentColor" strokeWidth="2.200">
      <path d="M1.500 7.500L7 2L12.500 7.500M1.500 14.500L7 20L12.500 14.500" />
    </svg>
  );
}

function Properties() {
  return (
    <div className="flex h-[691px] shrink-0 flex-col overflow-hidden text-[22px] leading-none text-[#222]">
      <div className="flex h-[118px] shrink-0 flex-col border-b-2 border-[#d3d3d3] bg-gradient-to-b from-[#fafafa] to-[#e2e2e2]">
        <div className="flex h-[50px] items-center">
          <span className="ml-[180px] -translate-y-[1px] tracking-[-0.7px]">Properties: Viewport</span>
          <GearButton />
        </div>
        <div className="mt-[4px] flex gap-[12px] pl-[208px]">
          <svg viewBox="2170 214 48 48" className="size-[48px]" fill="none" stroke="#2f8bfb" strokeWidth="2.200">
            <path d="M2173 226.500h10.500l4-6h14l4 6h10.500v24.500h-43z" />
            <circle cx="2194" cy="240.500" r="12.500" />
            <circle cx="2194" cy="240.500" r="9" />
          </svg>
          <svg viewBox="2230 214 48 48" className="size-[48px]" fill="none">
            <rect x="2233" y="219" width="42" height="38" stroke="#777" strokeWidth="2.200" />
            <rect x="2237" y="224" width="34" height="27" stroke="#bbb" strokeWidth="1.500" />
            <rect x="2241" y="228" width="26" height="19" stroke="#bbb" strokeWidth="1.500" />
          </svg>
          <svg viewBox="2290 214 48 48" className="size-[48px]" fill="none" stroke="#777" strokeWidth="2">
            <circle cx="2304" cy="246.500" r="11.300" />
            <path d="M2308 236a9 9 0 1 1 8 7.500" stroke="#888" />
            <circle cx="2326" cy="224" r="7.700" stroke="#999" />
          </svg>
        </div>
      </div>
      <div className="mt-[17px] flex h-[38px] shrink-0 items-center">
        <span className="w-[107px] text-right">Title:</span>
        <div className="ml-[18px] flex h-[36px] w-[432px] items-center border border-[#b1b1b1] bg-white pl-[6px] pt-[1px]">Perspective</div>
      </div>
      <div className="mt-[11px] flex h-[38px] shrink-0 items-center">
        <span className="w-[107px] text-right">Size:</span>
        <span className="ml-[18px] tracking-[0.3px] [font-feature-settings:'calt'_0]">1638 x 1332</span>
      </div>
      <div className="ml-[16px] mr-[16px] mt-[19px] h-[2px] shrink-0 bg-[#d2d2d2]" />
      <span className="ml-[16px] mt-[19px] tracking-[0.1px]">Projection</span>
      <div className="mt-[7px] flex flex-col pl-[60px]">
        {['Parallel', 'Perspective', 'Two point perspective'].map((t, i) => (
          <div key={t} className="flex h-[36px] items-center gap-[8px]">
            <Radio on={i === 1} />
            <span>{t}</span>
          </div>
        ))}
      </div>
      <div className="ml-[16px] mr-[16px] mt-[26px] h-[2px] shrink-0 bg-[#d2d2d2]" />
      <span className="ml-[16px] mt-[19px]">Wallpaper</span>
      <div className="mt-[19px] flex h-[28px] shrink-0 items-center pl-[70px]">
        <span className="w-[136px] tracking-[-0.15px]">Choose...</span>
        <Chevrons className="text-[#555]" />
      </div>
      <div className="mt-[8px] flex flex-col pl-[56px] text-[#b0b0b0]">
        {['Show wallpaper', 'Show wallpaper as gray scale'].map((t) => (
          <div key={t} className="flex h-[40px] items-center gap-[9px]">
            <Check off />
            <span>{t}</span>
          </div>
        ))}
      </div>
      <div className="ml-[16px] mr-[16px] mt-[29px] h-[2px] shrink-0 bg-[#d2d2d2]" />
      <span className="ml-[16px] mt-[18px]">Camera</span>
    </div>
  );
}

function PanelIcons() {
  return (
    <div className="flex gap-[11px] pl-[109px]">
      <svg viewBox="2071 908 67 48" className="h-[48px] w-[67px]" fill="none" stroke="#2386fb" strokeWidth="2.200" strokeLinejoin="round">
        <path d="M2104 913.500l22.500 12.500l-22.500 13.500l-22.500-13.500zM2088.500 930.500l-7 4.200l22.500 14l22.500-14l-7-4.200" />
      </svg>
      <svg viewBox="2149 908 32 48" className="h-[48px] w-[32px]" fill="none" stroke="#777" strokeWidth="2">
        <path d="M2153 913h17.500l7 8v26.500h-24.500zM2169 913v8.500h8.500" />
      </svg>
      <svg viewBox="2199 908 48 48" className="ml-[7px] h-[48px] w-[48px]" fill="none" stroke="#777" strokeWidth="2" strokeLinejoin="round">
        <path d="M2206 924.500l14.500-11l20 6.500v22.500l-15 10l-19.500-7zM2206 924.500l19.500 6.500l15-11M2225.500 931v21.500" />
      </svg>
      <svg viewBox="2261 908 48 48" className="ml-[3px] h-[48px] w-[48px]" fill="none" stroke="#777" strokeWidth="2">
        <path d="M2271 944v-24q0-5.500 5.500-5.500h25q4 .5 4 6h-7q-1-5.500 4-6M2298 920v26q0 5-5 5.500h-23q-5-.5-5-4t4-3.500h24M2290 951q-5-3-2-6q4-3 6 0q0 3-4 2.500" />
      </svg>
      <svg viewBox="2320 908 48 48" className="h-[48px] w-[48px]" fill="none" stroke="#777" strokeWidth="1.800">
        <rect x="2324" y="913" width="41" height="32.500" rx="2" />
        <rect x="2327.500" y="916.500" width="34" height="22" />
        <path d="M2340 945.500l-2 5.500M2349 945.500l2 5.500M2331 951h26" />
      </svg>
      <div className="ml-[5px] mt-[4px] flex size-[40px] items-center justify-center rounded-full border-2 border-[#777] text-[33px] leading-none text-[#777]">?</div>
    </div>
  );
}

function Bulb({ dim }: { dim?: boolean }) {
  return (
    <svg viewBox="0 0 28 32" className={'h-[32px] w-[28px] shrink-0 ' + (dim ? 'opacity-35' : '')}>
      <path d="M14 1.500c7 0 11 4.500 11 10c0 5.500-5.500 7.500-7 13.500h-8C8.500 19 3 17 3 11.500C3 6 7 1.500 14 1.500z" fill="url(#bulb)" stroke="#e8971c" strokeWidth=".8" />
      <ellipse cx="14" cy="9" rx="7.500" ry="4" fill="#fff2a8" opacity=".7" />
      <path d="M10 25h8v4l-2 2h-4l-2-2z" fill="#cdd3da" stroke="#9aa2aa" strokeWidth=".8" />
      <path d="M10 27.500h8" stroke="#8b939b" />
    </svg>
  );
}

function Lock({ dim }: { dim?: boolean }) {
  return (
    <svg viewBox="0 0 28 30" className={'h-[30px] w-[28px] shrink-0 ' + (dim ? 'opacity-35' : '')}>
      <path d="M15.500 14V7.500a5 5 0 0 1 10.500 0v5.500" fill="none" stroke="#8c8c8c" strokeWidth="4" />
      <path d="M15.500 14V7.500a5 5 0 0 1 10.500 0v5.500" fill="none" stroke="#f0f0f0" strokeWidth="1.600" />
      <rect x="1.500" y="12" width="18.500" height="16" rx="1" fill="url(#lock)" stroke="#93500f" />
      <path d="M2 16.500h17.500M2 20.500h17.500M2 24.500h17.500" stroke="#8a4a0c" strokeOpacity=".45" />
    </svg>
  );
}

const LAYERS = [
  ['D...', '#000000'],
  ['L...', '#d42213'],
  ['L...', '#8e4bd0'],
  ['L...', '#0b3dff'],
  ['L...', '#068c12'],
  ['L...', '#ffffff'],
];

function Layers() {
  return (
    <div className="flex flex-1 flex-col text-[22px] leading-none text-[#222]">
      <div className="flex h-[118px] shrink-0 flex-col border-b-2 border-[#d3d3d3] bg-gradient-to-b from-[#fafafa] to-[#e2e2e2]">
        <div className="flex h-[50px] items-center">
          <span className="ml-[208px] -translate-y-[1px] tracking-[-0.45px]">Panels: Layers</span>
          <GearButton />
        </div>
        <div className="mt-[4px]"><PanelIcons /></div>
      </div>
      <div className="flex h-[48px] shrink-0 items-center border-b-2 border-[#c7c7c7] bg-[#f0f0f0] pb-[1px] text-[#1c1c1c]">
        <span className="w-[82px] pl-[8px]">Name</span>
        {['w-[46px]', 'w-[46px]', 'w-[46px]', 'w-[60px]', 'w-[48px]'].map((w, i) => (
          <div key={i} className={'h-[34px] border-l-2 border-[#d4d4d4] ' + w} />
        ))}
        <div className="flex h-[34px] w-[114px] items-center border-l-2 border-[#d4d4d4] pl-[8px]">Linetype</div>
        <div className="h-[34px] w-[46px] border-l-2 border-[#d4d4d4]" />
        <div className="flex h-[34px] items-center border-l-2 border-[#d4d4d4] pl-[8px] tracking-[-0.3px]">Print...</div>
      </div>
      <div className="flex h-[458px] shrink-0 flex-col bg-white">
        {LAYERS.map(([n, c], i) => (
          <div key={i} className="flex h-[34px] shrink-0 items-center">
            <span className="w-[92px] shrink-0 -translate-y-[1px] pl-[38px] tracking-[-0.2px]">{n}</span>
            <Radio on={i === 0} />
            <div className="ml-[18px]"><Bulb dim={i === 0} /></div>
            <div className="-mt-[2px] ml-[18px]"><Lock dim={i === 0} /></div>
            <div className="ml-[25px] size-[28px] shrink-0 border-2 border-black" style={{ backgroundColor: c }} />
            <div className="ml-[20px] size-[28px] shrink-0 rounded-full border-2 border-black bg-[#fafafa]" />
            <span className="ml-[28px] w-[78px] shrink-0 translate-y-[1px] tracking-[-0.35px]">{'Conti...'}</span>
            <Chevrons className="text-[#666]" />
            <svg viewBox="0 0 32 32" className="ml-[17px] size-[32px] shrink-0"><path d="M16 2L30 16L16 30L2 16Z" fill={c} stroke="#000" strokeWidth="2" /></svg>
            <span className="ml-[19px] w-[73px] shrink-0 translate-y-[1px] tracking-[-0.35px]">{'Defa...'}</span>
            <Chevrons className="text-[#666]" />
          </div>
        ))}
      </div>
      <div className="flex h-[66px] shrink-0 items-center border-t-2 border-[#d2d2d2] bg-[#ebebeb] pb-[4px] pl-[37px]">
        <div className="flex h-[34px] w-[93px] rounded-[7px] border border-[#cfcfcf] border-b-[#b0b0b0] bg-gradient-to-b from-white to-[#f3f3f3]">
          <div className="flex w-[48px] items-center justify-center border-r-2 border-[#d4d4d4]">
            <svg viewBox="0 0 24 24" className="size-[24px]" stroke="#444" strokeWidth="2"><path d="M1 12h22M12 1v22" /></svg>
          </div>
          <div className="flex w-[40px] items-center justify-center">
            <svg viewBox="0 0 24 24" className="size-[24px]" stroke="#aaa" strokeWidth="2"><path d="M1 12h22" /></svg>
          </div>
        </div>
        <div className="ml-[34px] flex h-[34px] w-[70px] items-center rounded-[7px] border border-[#cfcfcf] border-b-[#b0b0b0] bg-gradient-to-b from-white to-[#f3f3f3] pl-[10px]">
          <Gear className="size-[22px]" />
          <svg viewBox="0 0 14 9" className="ml-[14px] h-[9px] w-[14px]" fill="none" stroke="#444" strokeWidth="2"><path d="M1.500 1.500L7 7L12.500 1.500" /></svg>
        </div>
      </div>
    </div>
  );
}

/* ------------------------------------------------------------------ */

function StatusBar() {
  return (
    <div className="flex h-[56px] shrink-0 items-center whitespace-nowrap border-t-2 border-[#d0d0d0] bg-gradient-to-b from-[#dadada] to-[#d1d1d1] pt-[3px] text-[22px] leading-none text-[#222]">
      <div className="ml-[9px] flex w-[28px] flex-col gap-[4px]">
        {[0, 1, 2, 3].map((i) => <div key={i} className="h-[2px] bg-[#767676]" />)}
      </div>
      <span className="ml-[5px] w-[1538px]">Command: Hide</span>
      <span className="w-[107px] tracking-[0.2px]">Meters</span>
      <div className="flex h-[32px] w-[139px] items-center justify-between rounded-[8px] border-2 border-[#9a9a9a] pl-[11px] pr-[7px]">
        <span>CPlane</span>
        <Chevrons className="scale-90 text-[#8a8a8a]" />
      </div>
      <span className="ml-[28px] w-[164px] tracking-[-0.25px]">X: 2.80</span>
      <span className="w-[170px] tracking-[-0.25px]">Y: 10.89</span>
      <span className="tracking-[-0.25px]">Z: 0.00</span>
    </div>
  );
}

export default function App() {
  return (
    <div className={'flex h-[1600px] w-[2560px] flex-col overflow-hidden bg-[#1a1a1c] ' + FONT}>
      <Defs />
      <MenuBar />
      <div className="mt-[2px] flex min-h-0 flex-1 flex-col overflow-hidden rounded-[10px]">
        <TitleBar />
        <div className="flex min-h-0 flex-1">
          <LeftPanel />
          <Center />
          <div className="flex min-w-0 flex-1 flex-col bg-[#ebebeb]">
            <div className="flex flex-1 flex-col border-l-2 border-[#808080]">
              <Properties />
              <div className="h-[3px] shrink-0 bg-[#808080]" />
              <Layers />
            </div>
          </div>
        </div>
        <StatusBar />
      </div>
    </div>
  );
}
